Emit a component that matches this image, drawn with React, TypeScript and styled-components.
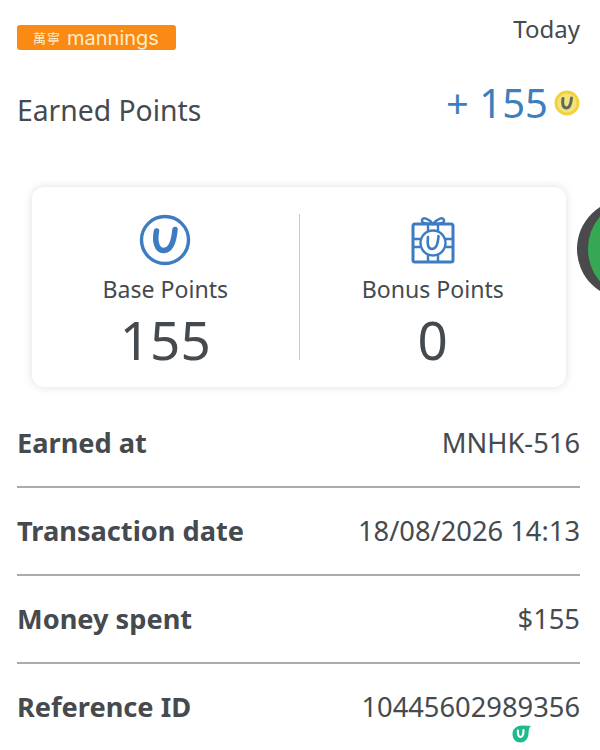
import React from 'react'
import styled, { createGlobalStyle } from 'styled-components'

const GlobalStyle = createGlobalStyle`
  html, body {
    margin: 0;
    padding: 0;
    background: #fff;
  }
  body {
    font-family: 'Noto Sans', 'Open Sans', sans-serif;
    color: #454a4f;
  }
`

interface DetailRow {
  label: string
  value: string
}

const rows: DetailRow[] = [
  { label: 'Earned at', value: 'MNHK-516' },
  { label: 'Transaction date', value: '18/08/2026 14:13' },
  { label: 'Money spent', value: '$155' },
  { label: 'Reference ID', value: '10445602989356' },
]

function BaseIcon(): JSX.Element {
  return (
    <svg width='52' height='52' viewBox='0 0 52 52' fill='none'>
      <circle cx='26' cy='26' r='23.5' stroke='#3d7cc2' strokeWidth='3.4' />
      <path d='M17.5 17 C15.5 27 17.5 37 25 36.5 C32 36 35 27 36 15.5' stroke='#3d7cc2' strokeWidth='5.5' strokeLinecap='round' />
    </svg>
  )
}

function GiftIcon(): JSX.Element {
  return (
    <svg width='44' height='48' viewBox='0 0 44 48' fill='none' stroke='#3d7cc2' strokeWidth='2.4'>
      <rect x='2' y='8' width='40' height='38' rx='2' strokeWidth='3' />
      <path d='M22 8 C17 2 12 1 11 4 C10 7 15 8 22 8 C29 8 34 7 33 4 C32 1 27 2 22 8 Z' />
      <path d='M17 8 V15 M27 8 V15 M17 39 V46 M27 39 V46 M2 23 H9 M2 31 H9 M35 23 H42 M35 31 H42' />
      <circle cx='22' cy='27' r='12.5' />
      <path d='M17 21 C16 28 17 33 21 33 C25 33 27 28 27.5 20' strokeWidth='2.6' strokeLinecap='round' />
    </svg>
  )
}

function CoinIcon(): JSX.Element {
  return (
    <svg width='26' height='26' viewBox='0 0 26 26' fill='none'>
      <circle cx='13' cy='13' r='12.5' fill='#f0d23f' />
      <circle cx='13' cy='13' r='9.5' fill='#f6e27a' />
      <path d='M9 8.5 C8 14 9 18 12.5 18 C16 18 17 14 17.5 8' stroke='#5c6b5a' strokeWidth='3' strokeLinecap='round' />
    </svg>
  )
}

function DropIcon(): JSX.Element {
  return (
    <svg width='20' height='18' viewBox='0 0 20 18' fill='none'>
      <path d='M0.5 9 C0.5 3 6 0 11 0.5 L19.5 1 C16.5 2.5 17 5 16.5 9 C16 14 12.5 17.5 8.5 17.5 C4 17.5 0.5 14 0.5 9 Z' fill='#1dbb8b' />
      <path d='M6 5.5 C5.5 9 6.5 12 8.5 12 C10.5 12 11.5 9.5 11.5 5' stroke='#fff' strokeWidth='2.2' strokeLinecap='round' />
    </svg>
  )
}

export default function App(): JSX.Element {
  return (
    <Page>
      <GlobalStyle />
      <TopRow>
        <Brand>
          <BrandHan>萬寧</BrandHan>
          <BrandName>mannings</BrandName>
        </Brand>
        <DateLabel>Today</DateLabel>
      </TopRow>
      <EarnedRow>
        <EarnedLabel>Earned Points</EarnedLabel>
        <EarnedValue>
          + 155
          <CoinIcon />
        </EarnedValue>
      </EarnedRow>
      <Card>
        <CardColumn>
          <IconSlot>
            <BaseIcon />
          </IconSlot>
          <PointsLabel>Base Points</PointsLabel>
          <PointsValue>155</PointsValue>
        </CardColumn>
        <CardDivider />
        <CardColumn>
          <IconSlot>
            <GiftIcon />
          </IconSlot>
          <PointsLabel>Bonus Points</PointsLabel>
          <PointsValue>0</PointsValue>
        </CardColumn>
      </Card>
      <FloatingButton />
      <Details>
        {rows.map(row => (
          <Row key={row.label}>
            <RowLabel>{row.label}</RowLabel>
            <RowValue>{row.value}</RowValue>
          </Row>
        ))}
      </Details>
      <FloatingDrop>
        <DropIcon />
      </FloatingDrop>
    </Page>
  )
}

// Styled components
const Page = styled.div`
  position: relative;
  width: 600px;
  height: 750px;
  overflow: hidden;
  padding: 14px 20px 0 17px;
  box-sizing: border-box;
`
const TopRow = styled.div`
  display: flex;
  justify-content: space-between;
  align-items: flex-start;
  height: 64px;
`
const Brand = styled.div`
  display: flex;
  align-items: center;
  gap: 6px;
  width: 159px;
  height: 25px;
  margin-top: 11px;
  padding-left: 16px;
  box-sizing: border-box;
  background: #fb8a14;
  border-radius: 3px;
  color: #fdeccb;
`
const BrandHan = styled.span`
  font-family: 'Noto Sans CJK TC', sans-serif;
  font-size: 13px;
  letter-spacing: 1px;
`
const BrandName = styled.span`
  font-family: Inter, sans-serif;
  font-size: 20px;
  line-height: 24px;
`
const DateLabel = styled.span`
  margin-top: -1px;
  font-size: 24px;
  line-height: 32px;
`
const EarnedRow = styled.div`
  display: flex;
  justify-content: space-between;
  align-items: center;
  height: 52px;
`
const EarnedLabel = styled.span`
  font-size: 28.3px;
  line-height: 38px;
  margin-top: 11px;
`
const EarnedValue = styled.span`
  display: flex;
  align-items: center;
  gap: 6px;
  margin-top: -2px;
  color: #3d7fbd;
  font-size: 40px;
  line-height: 52px;
`
const Card = styled.div`
  display: flex;
  align-items: stretch;
  width: 534px;
  height: 200px;
  margin: 57px 0 0 15px;
  background: #fff;
  border-radius: 12px;
  box-shadow: 0 0 10px rgba(0, 0, 0, 0.13);
`
const CardColumn = styled.div`
  flex: 1;
  display: flex;
  flex-direction: column;
  align-items: center;
  padding-top: 27px;
`
const CardDivider = styled.div`
  flex: none;
  width: 1px;
  margin: 27px 0;
  background: #c9cbcd;
`
const IconSlot = styled.div`
  display: flex;
  align-items: center;
  justify-content: center;
  height: 52px;
`
const PointsLabel = styled.span`
  margin-top: 7px;
  font-size: 23.1px;
  line-height: 32px;
`
const PointsValue = styled.span`
  margin-top: 1px;
  font-size: 53px;
  line-height: 68px;
`
const FloatingButton = styled.div`
  position: absolute;
  top: 199px;
  left: 577px;
  width: 100px;
  height: 100px;
  box-sizing: border-box;
  background: #36a853;
  border-style: solid;
  border-color: #4a4a4c;
  border-width: 5px 11px;
  border-radius: 50%;
`
const Details = styled.div`
  display: flex;
  flex-direction: column;
  margin-top: 13px;
`
const Row = styled.div`
  display: flex;
  justify-content: space-between;
  align-items: center;
  height: 88px;
  box-sizing: border-box;
  border-bottom: 2px solid #a9abad;

  &:last-child {
    border-bottom-color: transparent;
  }
`
const RowLabel = styled.span`
  font-size: 27.2px;
  font-weight: 700;
  line-height: 36px;
`
const RowValue = styled.span`
  font-size: 27.3px;
  line-height: 36px;
`
const FloatingDrop = styled.div`
  position: absolute;
  top: 725px;
  left: 512px;
  display: flex;
`
